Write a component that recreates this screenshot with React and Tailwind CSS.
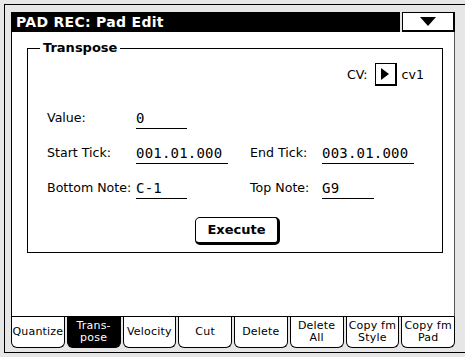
export default function App() {
  const tabs = [
    ["Quantize"],
    ["Trans-", "pose"],
    ["Velocity"],
    ["Cut"],
    ["Delete"],
    ["Delete", "All"],
    ["Copy fm", "Style"],
    ["Copy fm", "Pad"],
  ];
  const sans = { fontFamily: '"DejaVu Sans", sans-serif' };
  const label = "text-[12.6px] leading-[14px] text-black whitespace-nowrap";
  const field =
    "h-[18px] border-b border-black text-[14px] leading-[14px] tracking-[0.2px] text-black font-['DejaVu_Sans_Mono',monospace]";
  return (
    <div
      className="w-[465px] h-[357px] bg-[#e6e6e6] overflow-hidden pt-[4px] pl-[4px]"
      style={sans}
    >
      <div className="w-[480px] h-[349px] border border-black pt-[7px] pl-[6px] pb-[4px] flex flex-col">
        <div className="w-[444px] flex flex-col">
          {/* title row */}
          <div className="h-[20px] flex gap-[2px]">
            <div className="flex-1 bg-black text-white font-bold text-[14px] leading-[20px] pl-[5px] tracking-[0.3px]">
              PAD REC: Pad Edit
            </div>
            <div className="w-[53px] bg-white border border-black border-r-2 border-b-2 flex items-center justify-center">
              <svg width="16" height="9" viewBox="0 0 16 9">
                <polygon points="0,0 16,0 8,9" fill="black" />
              </svg>
            </div>
          </div>

          {/* panel */}
          <div className="h-[285px] bg-white border-l border-black border-r border-r-[#555] border-b border-b-black pt-[16px] pl-[15px] pr-[11px]">
            <div className="h-[205px] border border-black relative flex flex-col">
              <div className="absolute top-[-9px] left-[12px] bg-white px-[3px] font-bold text-[13px] leading-[16px] text-black">
                Transpose
              </div>

              {/* CV row */}
              <div className="mt-[14px] h-[23px] flex items-center justify-end pr-[18px]">
                <span className={label}>CV:</span>
                <div className="ml-[7px] w-[22px] h-[23px] border border-black border-r-2 border-b-2 flex items-center justify-center bg-white">
                  <svg width="8" height="12" viewBox="0 0 8 12">
                    <polygon points="0,0 8,6 0,12" fill="black" />
                  </svg>
                </div>
                <span className={label + " ml-[5px]"}>cv1</span>
              </div>

              {/* rows */}
              <div className="pl-[19px] mt-[25px] grid grid-cols-[89px_114px_72px_1fr] gap-y-[17px] items-start">
                <div className={label}>Value:</div>
                <div className={field + " w-[51px]"}>0</div>
                <div />
                <div />

                <div className={label}>Start Tick:</div>
                <div className={field + " w-[92px]"}>001.01.000</div>
                <div className={label}>End Tick:</div>
                <div className={field + " w-[92px]"}>003.01.000</div>

                <div className={label}>Bottom Note:</div>
                <div className={field + " w-[51px]"}>C-1</div>
                <div className={label}>Top Note:</div>
                <div className={field + " w-[52px]"}>G9</div>
              </div>

              <div className="mt-[18px] ml-[167px] w-[85px] h-[28px] border border-black border-r-[3px] border-b-[3px] rounded-[5px] flex items-center justify-center font-bold text-[13px] text-black">
                Execute
              </div>
            </div>
          </div>

          {/* tabs */}
          <div className="h-[31px] flex gap-[2px]">
            {tabs.map((t, i) => {
              const sel = i === 1;
              return (
                <div
                  key={i}
                  className={
                    "flex-1 border-x border-b border-black rounded-b-[6px] flex flex-col items-center justify-center text-[11px] leading-[12px] tracking-[0.2px] whitespace-nowrap " +
                    (sel ? "bg-black text-white" : "bg-white text-black")
                  }
                >
                  {t.map((l, j) => (
                    <span key={j}>{l}</span>
                  ))}
                </div>
              );
            })}
          </div>
        </div>
      </div>
    </div>
  );
}
